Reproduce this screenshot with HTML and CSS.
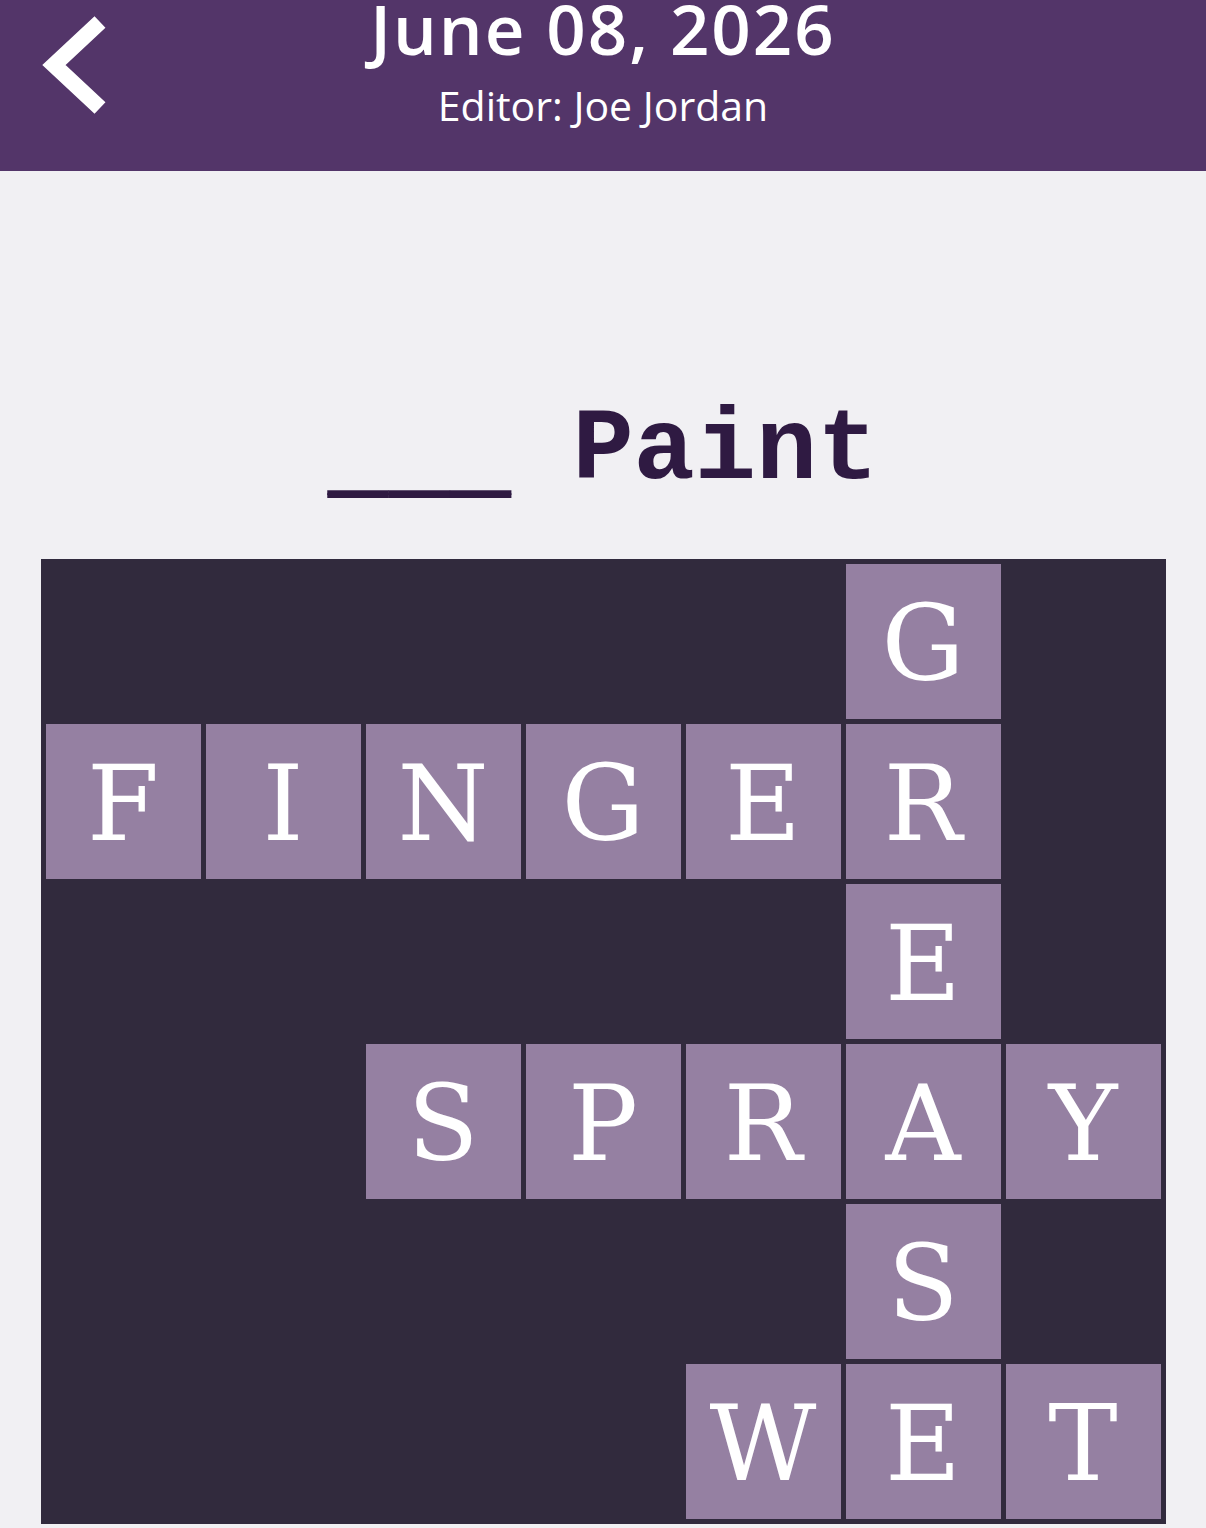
FILE: index.html
```html
<!DOCTYPE html>
<html lang="en">
<head>
<meta charset="utf-8">
<title>June 08, 2026</title>
<link rel="stylesheet" href="styles.css">
</head>
<body>
<header class="topbar">
  <div class="back">
    <svg class="chevron" width="120" height="130" viewBox="0 0 120 130" aria-hidden="true">
      <path d="M100 22 L54 65 L100 108" fill="none" stroke="#ffffff" stroke-width="16" stroke-linejoin="miter" stroke-linecap="butt"/>
    </svg>
  </div>
  <div class="titles">
    <div class="date">June 08, 2026</div>
    <div class="editor">Editor: Joe Jordan</div>
  </div>
  <div class="spacer"></div>
</header>
<main class="content">
  <div class="clue"><span class="blank">___</span> Paint</div>
  <div class="board">
    <div class="cell"></div><div class="cell"></div><div class="cell"></div><div class="cell"></div><div class="cell"></div><div class="cell tile">G</div><div class="cell"></div>
    <div class="cell tile">F</div><div class="cell tile">I</div><div class="cell tile">N</div><div class="cell tile">G</div><div class="cell tile">E</div><div class="cell tile">R</div><div class="cell"></div>
    <div class="cell"></div><div class="cell"></div><div class="cell"></div><div class="cell"></div><div class="cell"></div><div class="cell tile">E</div><div class="cell"></div>
    <div class="cell"></div><div class="cell"></div><div class="cell tile">S</div><div class="cell tile">P</div><div class="cell tile">R</div><div class="cell tile">A</div><div class="cell tile">Y</div>
    <div class="cell"></div><div class="cell"></div><div class="cell"></div><div class="cell"></div><div class="cell"></div><div class="cell tile">S</div><div class="cell"></div>
    <div class="cell"></div><div class="cell"></div><div class="cell"></div><div class="cell"></div><div class="cell tile">W</div><div class="cell tile">E</div><div class="cell tile">T</div>
  </div>
</main>
</body>
</html>
```

FILE: styles.css
```css
html, body {
  margin: 0;
  padding: 0;
}
body {
  background: #f1f0f3;
  width: 1206px;
  height: 1528px;
  overflow: hidden;
  font-family: "Open Sans", "Lato", sans-serif;
}
.topbar {
  height: 171px;
  background: #533569;
  display: grid;
  grid-template-columns: 1fr auto 1fr;
  color: #ffffff;
  overflow: hidden;
}
.back {
  display: flex;
  align-items: flex-start;
}
.chevron {
  display: block;
}
.titles {
  display: flex;
  flex-direction: column;
  align-items: center;
}
.date {
  font-size: 69px;
  font-weight: 600;
  line-height: 52px;
  letter-spacing: 2px;
  white-space: nowrap;
  padding-top: 2px;
}
.editor {
  margin-top: 30px;
  font-size: 41px;
  font-weight: 400;
  line-height: 43px;
  white-space: nowrap;
}
.content {
  display: flex;
  flex-direction: column;
  align-items: center;
}
.clue {
  margin-top: 229px;
  font-family: "Liberation Mono", "Courier New", monospace;
  font-weight: 700;
  font-size: 102px;
  line-height: 102px;
  color: #2f1a42;
  white-space: pre;
}
.blank {
  display: inline-block;
  transform: translateY(6px);
  text-shadow: 0 3px 0 #2f1a42;
}
.board {
  margin-top: 57px;
  width: 1125px;
  height: 965px;
  box-sizing: border-box;
  padding: 5px;
  background: #312a3d;
  display: grid;
  grid-template-columns: repeat(7, 155px);
  grid-template-rows: repeat(6, 155px);
  gap: 5px;
}
.cell {
  display: flex;
  align-items: center;
  justify-content: center;
}
.tile {
  background: #9580a2;
  color: #ffffff;
  font-family: "DejaVu Serif", "Liberation Serif", serif;
  font-size: 104px;
  line-height: 104px;
  box-sizing: border-box;
  padding-top: 4px;
}
```
